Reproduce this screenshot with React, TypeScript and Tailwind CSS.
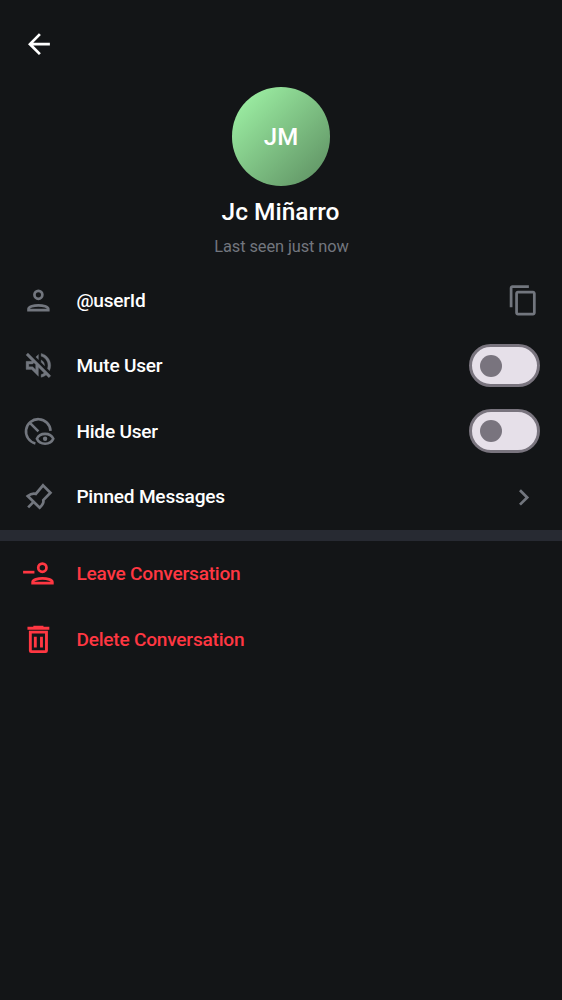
import type { ReactNode } from "react";

function Icon({ className, children }: { className: string; children: ReactNode }) {
  return (
    <svg viewBox="0 0 24 24" className={`h-[32.8px] w-[32.8px] shrink-0 ${className}`} fill="currentColor">
      {children}
    </svg>
  );
}

function Row({ icon, label, danger, children }: { icon: ReactNode; label: string; danger?: boolean; children?: ReactNode }) {
  return (
    <div className="flex h-[65.6px] items-center pr-[22px] pl-[22px]">
      <Icon className={danger ? "text-[#ff3742]" : "text-[#72767e]"}>{icon}</Icon>
      <span className={`ml-[21.6px] flex-1 pt-[1.4px] text-[19.1px] font-medium tracking-[-0.22px] ${danger ? "text-[#ff3742]" : "text-white"}`}>{label}</span>
      {children}
    </div>
  );
}

function Toggle({ label }: { label: string }) {
  return (
    <button
      role="switch"
      aria-checked="false"
      aria-label={label}
      className="mb-[0.4px] flex h-[43.7px] w-[71px] items-center rounded-full border-[3px] border-[#79747e] bg-[#e6e0e9] pl-[8px]"
    >
      <span className="h-[22px] w-[22px] rounded-full bg-[#79747e]" />
    </button>
  );
}

const person = (
  <g fill="none" stroke="currentColor" strokeWidth="2">
    <circle cx="12" cy="7.9" r="2.9" />
    <path d="M4.8 19.1v-.9c0-1.6 3.8-2.6 7.2-2.6s7.2 1 7.2 2.6v.9z" />
  </g>
);

const muted = (
  <path
    stroke="currentColor"
    strokeWidth="0.25"
    d="M4.34 2.93L2.93 4.34 7.29 8.7 7 9H3v6h4l5 5v-6.59l4.18 4.18c-.65.49-1.38.88-2.18 1.11v2.06a8.94 8.94 0 0 0 3.61-1.75l2.05 2.05 1.41-1.41L4.34 2.93zM10 15.17L7.83 13H5v-2h2.83l.88-.88L10 11.41v3.76zM19 12c0 .82-.15 1.61-.41 2.34l1.53 1.53c.56-1.17.88-2.48.88-3.87 0-4.28-2.99-7.86-7-8.77v2.06c2.89.86 5 3.54 5 6.71zm-7-8l-1.88 1.88L12 7.76zm4.5 8A4.5 4.5 0 0 0 14 7.97v1.79l2.48 2.48c.01-.08.02-.16.02-.24z"
  />
);

const hidden = (
  <g fill="none" stroke="currentColor" strokeWidth="1.9">
    <path d="M20.9 11.6A9 9 0 1 0 9.8 20.8M5.4 5.4l6.6 6.6" />
    <path d="M10.9 17.4c1-2.3 3.3-3.6 6-3.6s5 1.3 6 3.6c-1 2.3-3.3 3.6-6 3.6s-5-1.3-6-3.6z" />
    <circle cx="16.9" cy="17.4" r="1.6" fill="currentColor" stroke="none" />
  </g>
);

const pin = (
  <g fill="none" stroke="currentColor" strokeWidth="2">
    <path d="M15.4 3.2l5.4 5.4-5.2 5.4c.6 2.4-.9 3.9-2.7 5.5L4.2 11c1.9-1.5 3.9-2.1 5.9-1.6z" />
    <path d="M8.5 15.3l-4 4" />
  </g>
);

const leave = (
  <g fill="none" stroke="currentColor" strokeWidth="2">
    <circle cx="14.9" cy="7.8" r="3" />
    <path d="M7.8 19.2v-.9c0-1.6 3.8-2.6 7.2-2.6s7.2 1 7.2 2.6v.9z" />
    <path d="M.8 11.1h8.3" />
  </g>
);

const trash = (
  <>
    <path d="M8.3 2h7.4v.8H20v2.2H4V2.8h4.3zM8.7 10h2.1v8H8.7zM13.2 10h2.1v8h-2.1z" />
    <path d="M6.1 6.7h11.8v13.6a.6.6 0 0 1-.6.6H6.7a.6.6 0 0 1-.6-.6z" fill="none" stroke="currentColor" strokeWidth="2.1" />
  </>
);

export default function App() {
  return (
    <main className="flex min-h-[1000px] w-full flex-col bg-[#131517] font-['Roboto',sans-serif] text-white">
      <header className="flex h-[87px] items-start pt-[28px] pl-[22px]">
        <button aria-label="Back">
          <Icon className="text-white">
            <path d="M20.4 10.8H8.23l5.59-5.59L12.4 3.8l-8 8 8 8 1.41-1.41L8.23 12.8H20.4v-2z" />
          </Icon>
        </button>
      </header>
      <section className="flex h-[180.4px] flex-col items-center">
        <div className="mt-[0.3px] flex h-[98.5px] w-[98.5px] items-center justify-center rounded-full bg-linear-to-br from-[#a3f9aa] to-[#5c8d60] text-[24px] font-medium">
          JM
        </div>
        <h1 className="mt-[11px] mr-px text-[24.5px] leading-[30px] font-medium">Jc Miñarro</h1>
        <p className="mt-[10.2px] ml-px text-[16.4px] leading-[20px] tracking-[-0.1px] text-[#72767e]">Last seen just now</p>
      </section>
      <section>
        <Row icon={person} label="@userId">
          <Icon className="text-[#72767e]">
            <path d="M16 1H4c-1.1 0-2 .9-2 2v14h2V3h12V1zm3 4H8c-1.1 0-2 .9-2 2v14c0 1.1.9 2 2 2h11c1.1 0 2-.9 2-2V7c0-1.1-.9-2-2-2zm0 16H8V7h11v14z" />
          </Icon>
        </Row>
        <Row icon={muted} label="Mute User">
          <Toggle label="Mute User" />
        </Row>
        <Row icon={hidden} label="Hide User">
          <Toggle label="Hide User" />
        </Row>
        <Row icon={pin} label="Pinned Messages">
          <Icon className="text-[#72767e]">
            <path d="M10.2 6L8.79 7.41 13.37 12l-4.58 4.59L10.2 18l6-6z" />
          </Icon>
        </Row>
      </section>
      <div className="h-[11px] bg-[#272a32]" />
      <section>
        <Row icon={leave} label="Leave Conversation" danger />
        <Row icon={trash} label="Delete Conversation" danger />
      </section>
    </main>
  );
}
